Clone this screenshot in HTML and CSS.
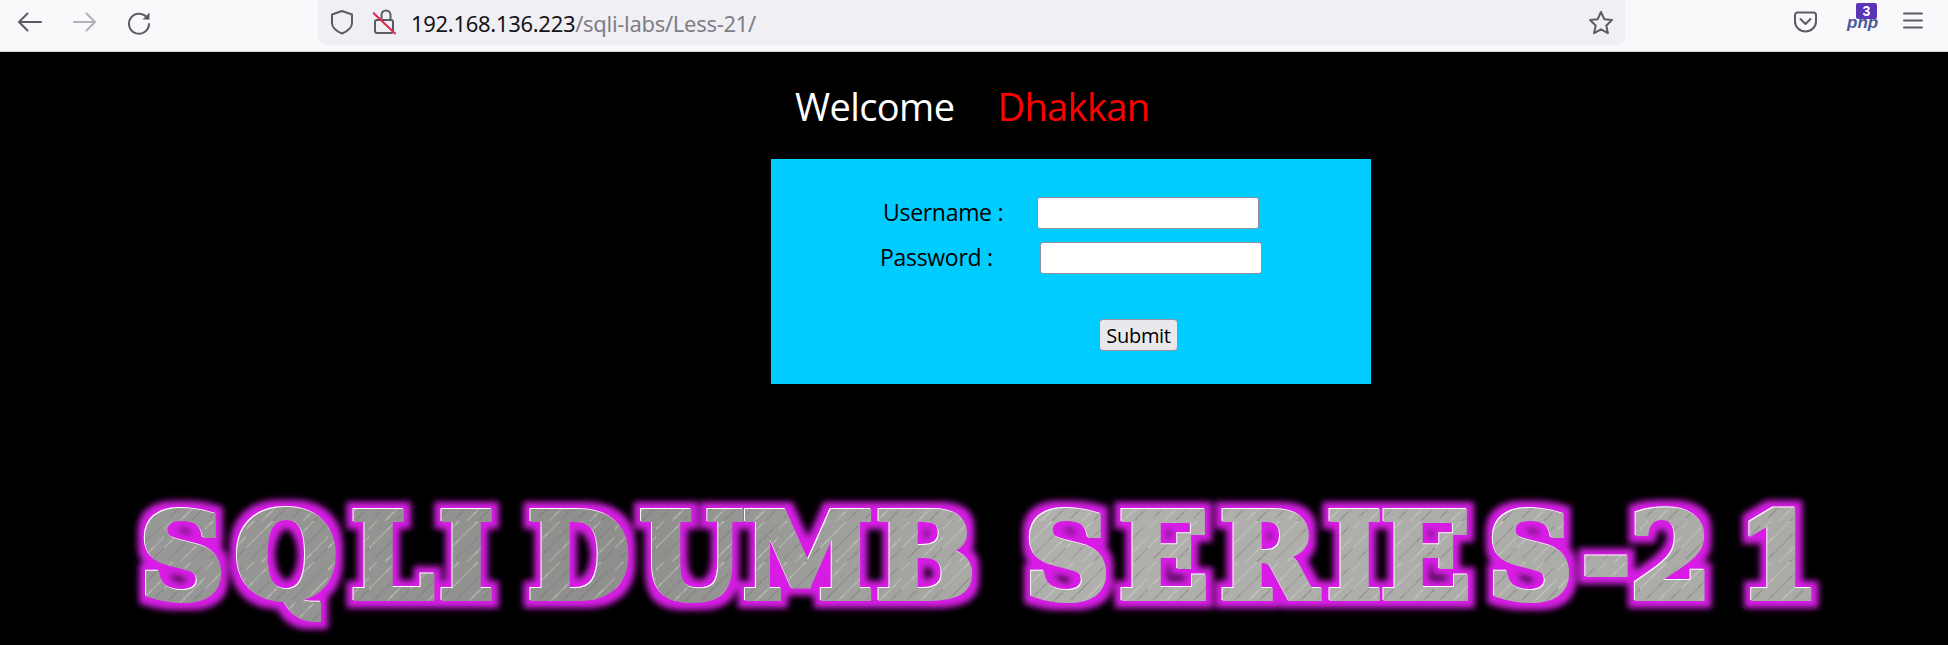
FILE: index.html
```html
<!DOCTYPE html>
<html lang="en">
<head>
<meta charset="utf-8">
<title>Less-21</title>
<link rel="stylesheet" href="styles.css">
</head>
<body>
<header class="toolbar">
  <nav class="nav-icons">
    <svg class="icon" width="28" height="28" viewBox="0 0 28 28"><path d="M25 14H3.500M11.500 5.500L3 14l8.500 8.500"/></svg>
    <svg class="icon icon-off" width="28" height="28" viewBox="0 0 28 28"><path d="M3 14h21M15.500 5.500L24 14l-8.500 8.500"/></svg>
    <svg class="icon" width="28" height="28" viewBox="0 0 28 28"><path d="M21.500 10.500A10 10 0 1 0 23 16"/><path class="solid" d="M16.500 11.500H23.500V4.500z"/></svg>
  </nav>
  <div class="urlbar">
    <svg class="icon" width="24" height="28" viewBox="0 0 24 28"><path d="M12 2l10 3.500V14c0 5-4 8-10 10.500C6 22 2 19 2 14V5.500z"/></svg>
    <svg class="icon lock" width="24" height="28" viewBox="0 0 24 28"><path d="M4 11h14a2 2 0 0 1 2 2v9a2 2 0 0 1-2 2H4a2 2 0 0 1-2-2v-9a2 2 0 0 1 2-2zM8.500 11V6a4.500 4.500 0 0 1 9 0v5"/><path class="slash" d="M0.500 4l21.500 20.500"/></svg>
    <div class="url"><span class="host">192.168.136.223</span><span class="path">/sqli-labs/Less-21/</span></div>
    <svg class="icon" width="26" height="26" viewBox="0 0 26 26"><path d="M13 2l3.300 7.200 7.700.9-5.700 5.300 1.600 7.800L13 19.300 6.100 23.200l1.600-7.800L2 10.100l7.700-.9z"/></svg>
  </div>
  <div class="tools">
    <svg class="icon icon-thick" width="24" height="24" viewBox="0 0 24 24"><path d="M4.500 1.500h16A2.500 2.500 0 0 1 23 4v6.500a10.500 10 0 0 1-21 0V4a2.500 2.500 0 0 1 2.500-2.500zM7.500 8l5 5 5-5"/></svg>
    <div class="php"><span class="php-word">php</span><span class="badge">3</span></div>
    <svg class="icon icon-menu" width="24" height="24" viewBox="0 0 24 24"><path d="M3 2.500h18M3 9.500h18M3 16.500h18"/></svg>
  </div>
</header>
<main class="page">
  <h1 class="welcome"><span>Welcome</span><span class="name">Dhakkan</span></h1>
  <form class="login">
    <div class="row"><label class="lbl-user">Username :</label><input class="field" type="text"></div>
    <div class="row row-pass"><label class="lbl-pass">Password :</label><input class="field" type="password"></div>
    <button class="submit" type="button">Submit</button>
  </form>
  <svg class="banner" width="1948" height="165" viewBox="0 0 1948 165">
    <defs>
      <linearGradient id="metal" gradientUnits="userSpaceOnUse" x1="130" y1="0" x2="1810" y2="0">
        <stop offset="0" stop-color="#989896"/><stop offset=".3" stop-color="#8e8e8c"/><stop offset=".55" stop-color="#b0b0ad"/><stop offset="1" stop-color="#aaaaa7"/>
      </linearGradient>
      <pattern id="brush" width="41" height="41" patternUnits="userSpaceOnUse">
        <path d="M-3 30L30-3M12 45L45 12M-3 11L11-3" stroke="#d0d0cc" stroke-width="1.500" opacity=".35"/>
        <path d="M5 38L38 5M24 44L44 24" stroke="#6e6e6b" stroke-width="1.500" opacity=".25"/>
      </pattern>
      <filter id="glow" x="-3%" y="-30%" width="106%" height="160%">
        <feMorphology in="SourceAlpha" operator="dilate" radius="7" result="fat"/>
        <feGaussianBlur in="fat" stdDeviation="3" result="soft"/>
        <feFlood flood-color="#d81fe6"/>
        <feComposite in2="soft" operator="in"/>
      </filter>
    </defs>
    <text class="title title-glow" fill="#000" stroke="#000" x="140 235 351 439 495 528 640 743 876 985 1025 1119 1220 1327 1381 1488 1582 1630 1715 1738" y="118">SQLI DUMB SERIES-2 1</text>
    <text class="title title-edge" fill="#fff" stroke="#fff" x="140 235 351 439 495 528 640 743 876 985 1025 1119 1220 1327 1381 1488 1582 1630 1715 1738" y="118">SQLI DUMB SERIES-2 1</text>
    <text class="title" fill="url(#metal)" stroke="url(#metal)" x="140 235 351 439 495 528 640 743 876 985 1025 1119 1220 1327 1381 1488 1582 1630 1715 1738" y="118">SQLI DUMB SERIES-2 1</text>
    <text class="title" fill="url(#brush)" stroke="url(#brush)" x="140 235 351 439 495 528 640 743 876 985 1025 1119 1220 1327 1381 1488 1582 1630 1715 1738" y="118">SQLI DUMB SERIES-2 1</text>
  </svg>
</main>
</body>
</html>
```
FILE: styles.css
```css
* { box-sizing: border-box; }
html, body { margin: 0; height: 645px; overflow: hidden; background: #000; }
body { font-family: "Open Sans", "Noto Sans", sans-serif; }
.toolbar { height: 52px; background: #f9f9fb; border-bottom: 1px solid #d4d4d8; display: flex; align-items: flex-start; padding-left: 16px; }
.icon { fill: none; stroke: #5b5b66; stroke-width: 2; stroke-linecap: round; stroke-linejoin: round; flex: none; }
.solid { fill: #5b5b66; stroke: none; }
.icon-off { opacity: .45; }
.nav-icons { display: flex; gap: 27px; padding-top: 8px; width: 302px; flex: none; }
.urlbar { width: 1307px; height: 45px; background: #f0f0f4; border-radius: 0 0 8px 8px; display: flex; align-items: center; padding: 0 11px 0 12px; gap: 19px; flex: none; }
.slash { stroke: #e22850; }
.url { flex: 1; margin-left: -5px; font-family: "Noto Sans", sans-serif; font-size: 22px; letter-spacing: -.3px; }
.host { color: #15141a; }
.path { color: #7e7e87; }
.tools { flex: 1; display: flex; align-items: center; height: 45px; padding-left: 168px; }
.php { position: relative; width: 31px; height: 28px; flex: none; margin-left: 30px; }
.php-word { position: absolute; left: 0; top: 4px; font: italic 700 17px "Liberation Sans", sans-serif; color: #4b5a99; }
.badge { position: absolute; left: 9px; top: -6px; width: 21px; height: 16px; border-radius: 2px; background: #5a35b5; color: #fff; font: 700 14px/16px "Liberation Sans", sans-serif; text-align: center; }
.icon-menu { margin-left: 23px; }
.page { display: flex; flex-direction: column; align-items: flex-start; }
.welcome { margin: 32px 0 0 795px; display: flex; gap: 43px; font-size: 38px; line-height: 44px; font-weight: 400; color: #fff; letter-spacing: -.6px; }
.name { color: #f00; }
.login { margin: 31px 0 0 771px; width: 600px; height: 225px; background: #00ccff; display: flex; flex-direction: column; align-items: flex-start; padding-top: 37px; }
.row { display: flex; align-items: center; height: 33px; margin-left: 112px; font-size: 23px; letter-spacing: -.3px; color: #000; }
.row-pass { margin: 12px 0 0 109px; }
.row label { padding-bottom: 2px; }
.lbl-user { width: 154px; }
.lbl-pass { width: 160px; }
.field { width: 222px; height: 32px; background: #fff; border: 1px solid #8f8f9d; border-radius: 3px; padding: 0; }
.submit { margin: 45px 0 0 328px; width: 79px; height: 32px; padding: 0; background: #e9e9ed; border: 1px solid #8f8f9d; border-radius: 4px; font: 400 20px "Open Sans", sans-serif; letter-spacing: -.3px; color: #000; }
.banner { display: block; margin-top: 96px; flex: none; }
.title { font-family: "DejaVu Serif", serif; font-weight: 700; font-size: 118px; stroke-width: 6px; }
.title-glow { filter: url(#glow); }
.title-edge { transform: translate(-1px, -1px); }
```
